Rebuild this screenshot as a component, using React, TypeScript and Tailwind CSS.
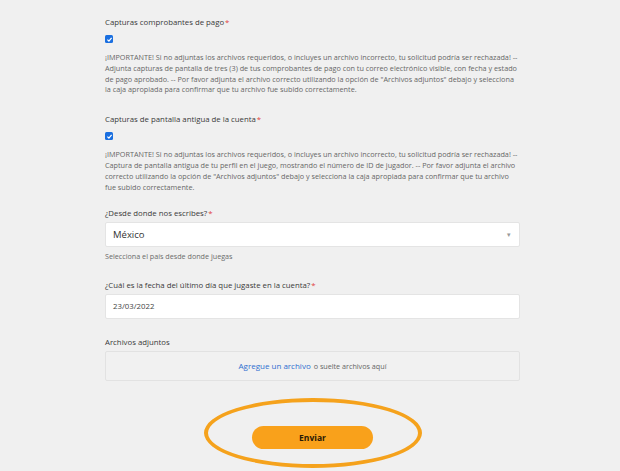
import type { ReactNode } from 'react';

const font = { fontFamily: '"Open Sans", "Noto Sans", sans-serif' };

function Label({ children, required = true }: { children: ReactNode; required?: boolean }) {
  return (
    <p className="text-[7.8px] leading-[14px] text-[#3a3a3a]">
      {children}
      {required && <span className="ml-[1px] text-[#e0413c]">*</span>}
    </p>
  );
}

function Check() {
  return (
    <div className="mt-[6px] flex h-[8px] w-[8px] items-center justify-center rounded-[1.5px] bg-[#1a6fe0]">
      <svg viewBox="0 0 10 10" className="h-[7px] w-[7px]">
        <path d="M2 5.2 L4.2 7.3 L8 2.8" fill="none" stroke="white" strokeWidth="1.8" />
      </svg>
    </div>
  );
}

function Note({ lines }: { lines: string[] }) {
  return (
    <div className="mt-[9px] text-[7.25px] leading-[10.8px] text-[#666]">
      {lines.map((l) => (
        <p key={l} className="whitespace-nowrap">
          {l}
        </p>
      ))}
    </div>
  );
}

export default function App() {
  return (
    <div className="relative h-[471px] w-[620px] overflow-hidden bg-[#f0f0f0]" style={font}>
      <div className="ml-[105px] w-[415px] pt-[15px]">
        <Label>Capturas comprobantes de pago</Label>
        <Check />
        <Note
          lines={[
            '¡IMPORTANTE! Si no adjuntas los archivos requeridos, o incluyes un archivo incorrecto, tu solicitud podría ser rechazada! --',
            'Adjunta capturas de pantalla de tres (3) de tus comprobantes de pago con tu correo electrónico visible, con fecha y estado',
            'de pago aprobado. -- Por favor adjunta el archivo correcto utilizando la opción de "Archivos adjuntos" debajo y selecciona',
            'la caja apropiada para confirmar que tu archivo fue subido correctamente.',
          ]}
        />

        <div className="mt-[17px]">
          <Label>Capturas de pantalla antigua de la cuenta</Label>
          <Check />
          <Note
            lines={[
              '¡IMPORTANTE! Si no adjuntas los archivos requeridos, o incluyes un archivo incorrecto, tu solicitud podría ser rechazada! --',
              'Captura de pantalla antigua de tu perfil en el juego, mostrando el número de ID de jugador. -- Por favor adjunta el archivo',
              'correcto utilizando la opción de "Archivos adjuntos" debajo y selecciona la caja apropiada para confirmar que tu archivo',
              'fue subido correctamente.',
            ]}
          />
        </div>

        <div className="mt-[14px]">
          <Label>¿Desde donde nos escribes?</Label>
          <div className="mt-[2px] flex h-[25px] items-center justify-between rounded-[2px] border border-[#e4e4e4] bg-white pl-[7px] pr-[8px]">
            <span className="text-[9.5px] text-[#333]">México</span>
            <span className="text-[7px] leading-none text-[#999]">▾</span>
          </div>
          <p className="mt-[4px] text-[7.2px] leading-[11px] text-[#6b6b6b]">Selecciona el país desde donde juegas</p>
        </div>

        <div className="mt-[16px]">
          <Label>¿Cuál es la fecha del último día que jugaste en la cuenta?</Label>
          <div className="mt-[2px] flex h-[25px] items-center rounded-[2px] border border-[#e4e4e4] bg-white pl-[7px]">
            <span className="text-[7.8px] text-[#444]">23/03/2022</span>
          </div>
        </div>

        <div className="mt-[16px]">
          <Label required={false}>Archivos adjuntos</Label>
          <div className="mt-[2px] flex h-[30px] items-center justify-center rounded-[2px] border border-[#e2e2e2] bg-[#f1f1f1]">
            <span className="text-[8px] text-[#2f6fd0]">Agregue un archivo</span>
            <span className="ml-[3px] text-[7.2px] text-[#666]">o suelte archivos aquí</span>
          </div>
        </div>
      </div>

      <div className="mt-[45px] flex justify-center pl-[5px]">
        <button className="h-[23px] w-[121px] rounded-full bg-[#f9a11b] text-[8.5px] font-bold text-[#2a1a05]">
          Enviar
        </button>
      </div>

      <div className="pointer-events-none absolute left-[204px] top-[398px] h-[70px] w-[218px] rounded-[50%] border-[4px] border-[#f5a21c]" />
    </div>
  );
}
